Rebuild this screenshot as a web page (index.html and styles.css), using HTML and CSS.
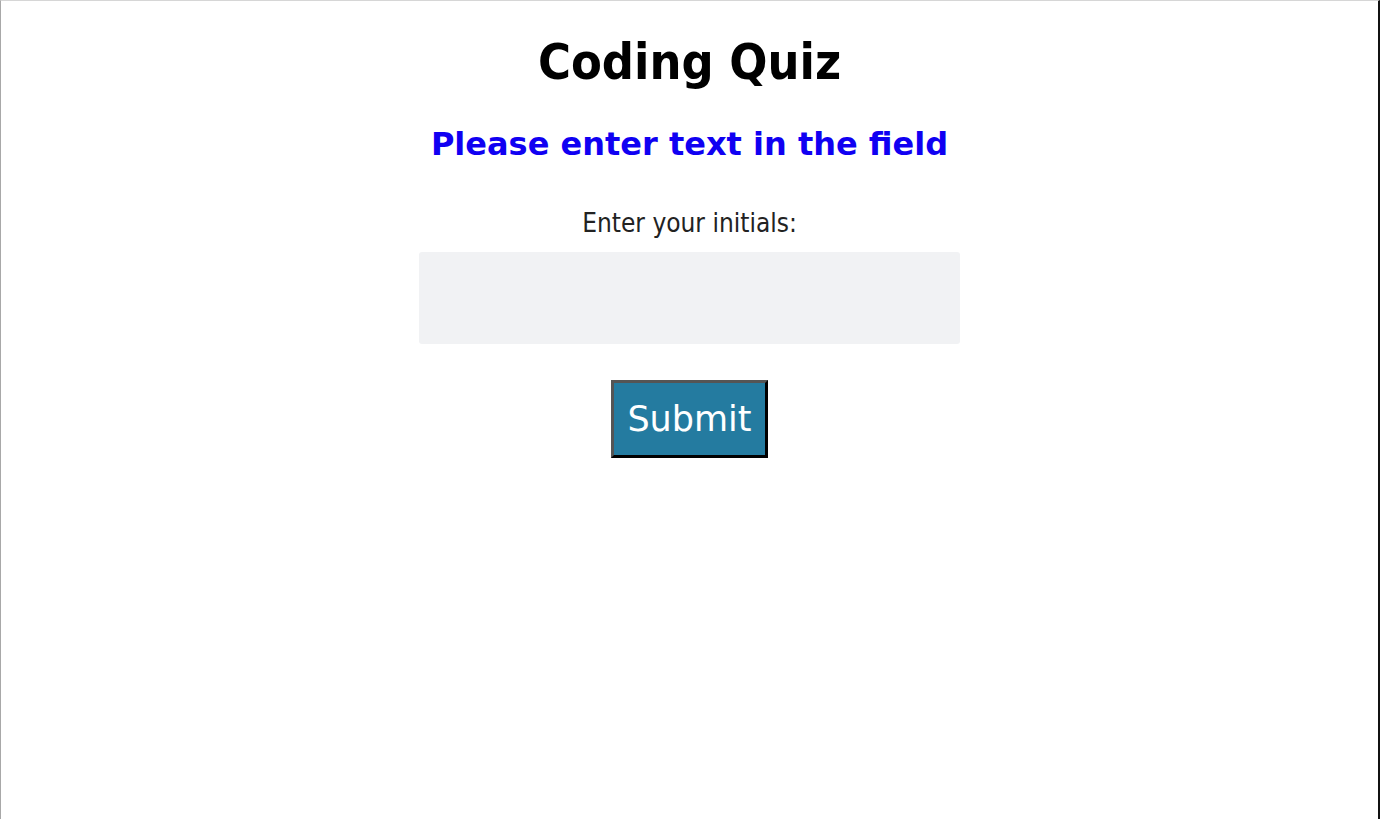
FILE: index.html
```html
<!DOCTYPE html>
<html lang="en">
<head>
<meta charset="utf-8">
<title>Coding Quiz</title>
<link rel="stylesheet" href="styles.css">
</head>
<body>
<div class="frame">
  <main class="page">
    <h1 class="title">Coding Quiz</h1>
    <h2 class="notice">Please enter text in the field</h2>
    <form class="form">
      <label class="label" for="initials">Enter your initials:</label>
      <input class="field" id="initials" type="text">
      <button class="submit" type="button">Submit</button>
    </form>
  </main>
</div>
</body>
</html>
```
FILE: styles.css
```css
html, body {
  margin: 0;
  height: 100%;
  background: #fff;
}
.frame {
  box-sizing: border-box;
  height: 819px;
  border-top: 1px solid #d6d6d6;
  border-left: 1px solid #a8a8a8;
  border-right: 2px solid #111;
  font-family: "DejaVu Sans", sans-serif;
}
.page {
  display: flex;
  flex-direction: column;
  align-items: center;
  padding-top: 31px;
}
.title {
  margin: 0;
  font-family: "DejaVu Sans Condensed", "DejaVu Sans", sans-serif;
  font-size: 50px;
  font-weight: bold;
  color: #000;
  line-height: 60px;
}
.notice {
  margin: 32px 0 0;
  font-size: 32px;
  font-weight: bold;
  color: #1000f2;
  line-height: 40px;
}
.form {
  display: flex;
  flex-direction: column;
  align-items: center;
  margin-top: 44px;
}
.label {
  font-family: "DejaVu Sans Condensed", "DejaVu Sans", sans-serif;
  font-size: 26px;
  color: #222;
  line-height: 30px;
}
.field {
  margin-top: 14px;
  width: 541px;
  height: 92px;
  box-sizing: border-box;
  border: none;
  border-radius: 3px;
  background: #f1f2f4;
}
.submit {
  margin-top: 36px;
  box-sizing: border-box;
  width: 157px;
  height: 78px;
  border: 3px solid;
  border-color: #555 #000 #000 #555;
  background: #247ba0;
  color: #fff;
  font-family: "DejaVu Sans", sans-serif;
  font-size: 35px;
  padding: 0;
}
```
